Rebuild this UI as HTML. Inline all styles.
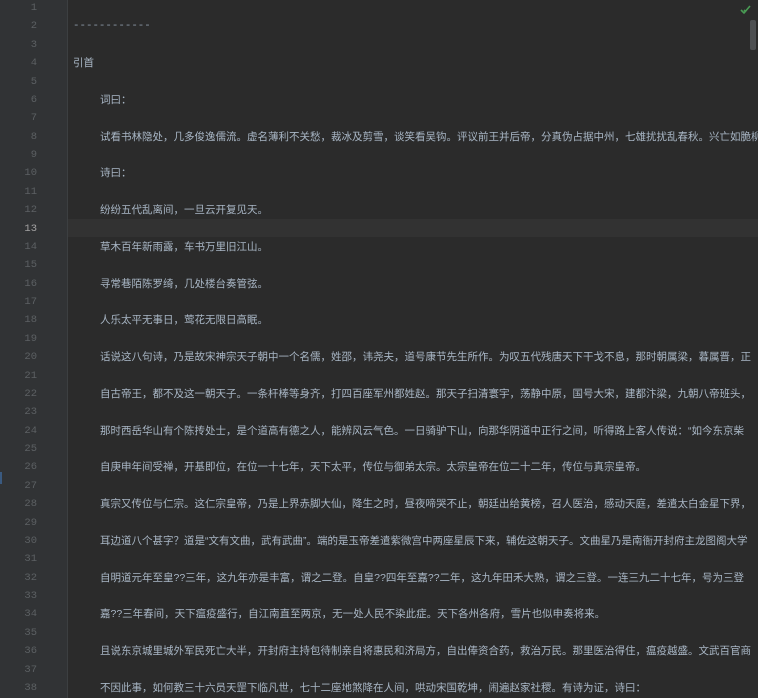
<!DOCTYPE html>
<html><head><meta charset="utf-8"><style>
html,body{margin:0;padding:0;width:758px;height:698px;overflow:hidden;background:#2b2b2b}
.g{position:absolute;left:0;top:0;width:67px;height:698px;background:#313335;border-right:1px solid #3c3f41}
.hl{position:absolute;left:0;top:219px;width:758px;height:18.4px;background:#323232}
.nums{position:absolute;left:0;top:-1px;width:37px;text-align:right;font:10.5px/18.38px "Liberation Mono",monospace;color:#5c6063}
.nums div{height:18.38px}
.nums .cur{color:#a4a3a3}
.code{position:absolute;left:73px;top:-1px;width:700px;white-space:nowrap;font:10.5px/18.38px "Liberation Sans","Noto Sans CJK SC",sans-serif;color:#a9b7c6}
.code div{height:18.38px;overflow:visible}
.i{padding-left:27px}
.d{font-family:"Liberation Mono",monospace;font-size:10.8px;color:#8a97a4}
.sb{position:absolute;left:750px;top:20px;width:6px;height:30px;background:#4d4f51;border-radius:2px}
</style></head><body>
<div class="hl"></div>
<div class="g"></div>
<div style="position:absolute;left:0;top:472px;width:2px;height:12px;background:#3a5a80"></div>
<div class="nums"><div>1</div><div>2</div><div>3</div><div>4</div><div>5</div><div>6</div><div>7</div><div>8</div><div>9</div><div>10</div><div>11</div><div>12</div><div class="cur">13</div><div>14</div><div>15</div><div>16</div><div>17</div><div>18</div><div>19</div><div>20</div><div>21</div><div>22</div><div>23</div><div>24</div><div>25</div><div>26</div><div>27</div><div>28</div><div>29</div><div>30</div><div>31</div><div>32</div><div>33</div><div>34</div><div>35</div><div>36</div><div>37</div><div>38</div></div>
<div class="code"><div></div><div class="d">------------</div><div></div><div>引首</div><div></div><div class="i">词曰：</div><div></div><div class="i">试看书林隐处，几多俊逸儒流。虚名薄利不关愁，裁冰及剪雪，谈笑看吴钩。评议前王并后帝，分真伪占据中州，七雄扰扰乱春秋。兴亡如脆柳</div><div></div><div class="i">诗曰：</div><div></div><div class="i">纷纷五代乱离间，一旦云开复见天。</div><div></div><div class="i">草木百年新雨露，车书万里旧江山。</div><div></div><div class="i">寻常巷陌陈罗绮，几处楼台奏管弦。</div><div></div><div class="i">人乐太平无事日，莺花无限日高眠。</div><div></div><div class="i">话说这八句诗，乃是故宋神宗天子朝中一个名儒，姓邵，讳尧夫，道号康节先生所作。为叹五代残唐天下干戈不息，那时朝属梁，暮属晋，正</div><div></div><div class="i">自古帝王，都不及这一朝天子。一条杆棒等身齐，打四百座军州都姓赵。那天子扫清寰宇，荡静中原，国号大宋，建都汴梁，九朝八帝班头，</div><div></div><div class="i">那时西岳华山有个陈抟处士，是个道高有德之人，能辨风云气色。一日骑驴下山，向那华阴道中正行之间，听得路上客人传说：“如今东京柴</div><div></div><div class="i">自庚申年间受禅，开基即位，在位一十七年，天下太平，传位与御弟太宗。太宗皇帝在位二十二年，传位与真宗皇帝。</div><div></div><div class="i">真宗又传位与仁宗。这仁宗皇帝，乃是上界赤脚大仙，降生之时，昼夜啼哭不止，朝廷出给黄榜，召人医治，感动天庭，差遣太白金星下界，</div><div></div><div class="i">耳边道八个甚字？道是“文有文曲，武有武曲”。端的是玉帝差遣紫微宫中两座星辰下来，辅佐这朝天子。文曲星乃是南衙开封府主龙图阁大学</div><div></div><div class="i">自明道元年至皇??三年，这九年亦是丰富，谓之二登。自皇??四年至嘉??二年，这九年田禾大熟，谓之三登。一连三九二十七年，号为三登</div><div></div><div class="i">嘉??三年春间，天下瘟疫盛行，自江南直至两京，无一处人民不染此症。天下各州各府，雪片也似申奏将来。</div><div></div><div class="i">且说东京城里城外军民死亡大半，开封府主持包待制亲自将惠民和济局方，自出俸资合药，救治万民。那里医治得住，瘟疫越盛。文武百官商</div><div></div><div class="i">不因此事，如何教三十六员天罡下临凡世，七十二座地煞降在人间，哄动宋国乾坤，闹遍赵家社稷。有诗为证，诗曰：</div></div>
<svg style="position:absolute;left:740px;top:4px" width="12" height="12" viewBox="0 0 12 12"><path d="M1 6l3 3 6-7M4 6l2 2" stroke="#499c54" stroke-width="1.6" fill="none"/></svg>
<div class="sb"></div>
</body></html>
